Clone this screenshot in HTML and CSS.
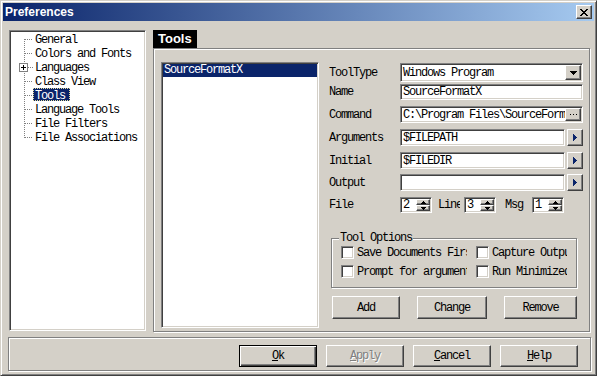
FILE: index.html
```html
<!DOCTYPE html>
<html lang="en">
<head>
  <meta charset="UTF-8">
  <title>Preferences</title>
  <link rel="stylesheet" href="styles.css">
</head>
<body>
  <div class="window">
    <div class="titlebar">
      <span class="title">Preferences</span>
      <span class="close">
        <svg width="8" height="7" viewBox="0 0 8 7"><path fill="#000" d="M0 0h2v1H0zM6 0h2v1H6zM1 1h2v1H1zM5 1h2v1H5zM2 2h4v1H2zM3 3h2v1H3zM2 4h4v1H2zM1 5h2v1H1zM5 5h2v1H5zM0 6h2v1H0zM6 6h2v1H6z"/></svg>
      </span>
    </div>

    <div class="main">
      <div class="tree sunken">
        <svg class="tree-lines" width="22" height="112" viewBox="0 0 22 112">
          <g stroke="#808080" stroke-dasharray="1 1" fill="none">
            <path d="M13.5 7v99"/>
            <path d="M14 7.5h8M14 21.5h8M17 35.5h5M14 49.5h8M14 63.5h8M14 77.5h8M14 91.5h8M14 105.5h8"/>
          </g>
          <rect x="8.5" y="31.5" width="8" height="8" fill="#fff" stroke="#808080"/>
          <path d="M10 35.5h5M12.5 33v5" stroke="#000"/>
        </svg>
        <ul class="tree-items">
          <li><span>General</span></li>
          <li><span>Colors and Fonts</span></li>
          <li><span>Languages</span></li>
          <li><span>Class View</span></li>
          <li><span class="sel">Tools</span></li>
          <li><span>Language Tools</span></li>
          <li><span>File Filters</span></li>
          <li><span>File Associations</span></li>
        </ul>
      </div>

      <div class="page">
        <div class="page-title">Tools</div>
        <div class="panel">
          <div class="tool-list sunken">
            <div class="list-item sel">SourceFormatX</div>
          </div>

          <div class="props">
            <div class="row r1">
              <label>ToolType</label>
              <div class="field sunken wide">
                <span class="val">Windows Program</span>
                <span class="btn inner-btn">
                  <svg width="7" height="4" viewBox="0 0 7 4"><path fill="#000" d="M0 0h7v1H0zM1 1h5v1H1zM2 2h3v1H2zM3 3h1v1H3z"/></svg>
                </span>
              </div>
            </div>
            <div class="row r2">
              <label>Name</label>
              <div class="field sunken wide"><span class="val">SourceFormatX</span></div>
            </div>
            <div class="row r3">
              <label>Command</label>
              <div class="field sunken wide">
                <span class="val">C:\Program Files\SourceFormatX\SFX.exe</span>
                <span class="btn inner-btn">
                  <svg width="7" height="1" viewBox="0 0 7 1"><path fill="#000" d="M0 0h1v1H0zM3 0h1v1H3zM6 0h1v1H6z"/></svg>
                </span>
              </div>
            </div>
            <div class="row r4">
              <label>Arguments</label>
              <div class="field sunken short"><span class="val">$FILEPATH</span></div>
              <span class="btn side-btn">
                <svg width="4" height="7" viewBox="0 0 4 7"><path fill="#0a246a" d="M0 0h1v7H0zM1 1h1v5H1zM2 2h1v3H2zM3 3h1v1H3z"/></svg>
              </span>
            </div>
            <div class="row r5">
              <label>Initial</label>
              <div class="field sunken short"><span class="val">$FILEDIR</span></div>
              <span class="btn side-btn">
                <svg width="4" height="7" viewBox="0 0 4 7"><path fill="#0a246a" d="M0 0h1v7H0zM1 1h1v5H1zM2 2h1v3H2zM3 3h1v1H3z"/></svg>
              </span>
            </div>
            <div class="row r6">
              <label>Output</label>
              <div class="field sunken short"><span class="val"></span></div>
              <span class="btn side-btn">
                <svg width="4" height="7" viewBox="0 0 4 7"><path fill="#0a246a" d="M0 0h1v7H0zM1 1h1v5H1zM2 2h1v3H2zM3 3h1v1H3z"/></svg>
              </span>
            </div>
            <div class="row r7">
              <label>File</label>
              <div class="spin sunken">
                <span class="val">2</span>
                <span class="spin-btns">
                  <span class="btn"><svg width="5" height="3" viewBox="0 0 5 3"><path fill="#000" d="M2 0h1v1H2zM1 1h3v1H1zM0 2h5v1H0z"/></svg></span>
                  <span class="btn"><svg width="5" height="3" viewBox="0 0 5 3"><path fill="#000" d="M0 0h5v1H0zM1 1h3v1H1zM2 2h1v1H2z"/></svg></span>
                </span>
              </div>
              <label class="lbl-line">Line</label>
              <div class="spin sunken">
                <span class="val">3</span>
                <span class="spin-btns">
                  <span class="btn"><svg width="5" height="3" viewBox="0 0 5 3"><path fill="#000" d="M2 0h1v1H2zM1 1h3v1H1zM0 2h5v1H0z"/></svg></span>
                  <span class="btn"><svg width="5" height="3" viewBox="0 0 5 3"><path fill="#000" d="M0 0h5v1H0zM1 1h3v1H1zM2 2h1v1H2z"/></svg></span>
                </span>
              </div>
              <label class="lbl-msg">Msg</label>
              <div class="spin sunken">
                <span class="val">1</span>
                <span class="spin-btns">
                  <span class="btn"><svg width="5" height="3" viewBox="0 0 5 3"><path fill="#000" d="M2 0h1v1H2zM1 1h3v1H1zM0 2h5v1H0z"/></svg></span>
                  <span class="btn"><svg width="5" height="3" viewBox="0 0 5 3"><path fill="#000" d="M0 0h5v1H0zM1 1h3v1H1zM2 2h1v1H2z"/></svg></span>
                </span>
              </div>
            </div>

            <div class="group">
              <span class="legend">Tool Options</span>
              <div class="checks">
                <div class="check"><span class="box sunken"></span><span class="clip c1">Save Documents First</span></div>
                <div class="check"><span class="box sunken"></span><span class="clip c2">Capture Output</span></div>
                <div class="check"><span class="box sunken"></span><span class="clip c1">Prompt for arguments</span></div>
                <div class="check"><span class="box sunken"></span><span class="clip c2">Run Minimized</span></div>
              </div>
            </div>

            <div class="actions">
              <button class="push b-add">Add</button>
              <button class="push b-change">Change</button>
              <button class="push b-remove">Remove</button>
            </div>
          </div>
        </div>
      </div>
    </div>

    <div class="footer">
      <button class="push default"><u>O</u>k</button>
      <button class="push disabled"><u>A</u>pply</button>
      <button class="push"><u>C</u>ancel</button>
      <button class="push"><u>H</u>elp</button>
    </div>
  </div>
</body>
</html>
```

FILE: styles.css
```css
* {
  box-sizing: border-box;
}
body {
  margin: 0;
  background: #d4d0c8;
  font-family: "Liberation Mono", monospace;
  font-size: 12px;
  letter-spacing: -1.2px;
  color: #000;
}
.window {
  width: 597px;
  height: 376px;
  border: 1px solid;
  border-color: #d4d0c8 #404040 #404040 #d4d0c8;
  box-shadow: inset 1px 1px #fff, inset -1px -1px #808080;
  padding: 2px;
  background: #d4d0c8;
}
.titlebar {
  height: 18px;
  display: flex;
  align-items: center;
  justify-content: space-between;
  padding: 0 2px;
  background: linear-gradient(to right, #0a246a, #a6caf0);
}
.title {
  font: bold 12px "Liberation Sans", Arial, sans-serif;
  letter-spacing: 0;
  color: #fff;
}
.btn,
.close {
  display: flex;
  align-items: center;
  justify-content: center;
  background: #d4d0c8;
  border: 1px solid;
  border-color: #fff #404040 #404040 #fff;
  box-shadow: inset -1px -1px #808080;
}
.close {
  width: 16px;
  height: 14px;
}
.sunken {
  background: #fff;
  border: 1px solid;
  border-color: #808080 #fff #fff #808080;
  box-shadow: inset 1px 1px #404040, inset -1px -1px #d4d0c8;
  padding: 1px;
}

/* left tree */
.main {
  display: flex;
  gap: 7px;
  padding: 9px 0 0 6px;
}
.tree {
  width: 137px;
  height: 301px;
  display: flex;
  align-items: flex-start;
}
.tree-lines {
  flex: none;
}
.tree-items {
  margin: 0;
  padding: 0;
  list-style: none;
}
.tree-items li {
  height: 14px;
  white-space: nowrap;
}
.tree-items span {
  display: inline-block;
  height: 13px;
  line-height: 17px;
  padding: 0 5px 0 2px;
}
.tree-items .sel {
  background: #0a246a;
  color: #fff;
  border: 1px dotted #e4dc9c;
  padding: 0 4px 0 1px;
  line-height: 14px;
}

/* right page */
.page {
  width: 438px;
}
.page-title {
  width: 44px;
  height: 18px;
  padding-left: 5px;
  background: #000;
  color: #fff;
  font: bold 13px "Liberation Sans", Arial, sans-serif;
  letter-spacing: 0;
  line-height: 17px;
}
.panel {
  width: 437px;
  height: 284px;
  border: 1px solid #808080;
  box-shadow: inset 1px 1px #fff, 1px 1px #fff;
  display: flex;
  padding: 13px 0 0 7px;
}
.tool-list {
  width: 158px;
  height: 266px;
  flex: none;
}
.list-item {
  height: 13px;
  line-height: 13px;
  padding-left: 1px;
}
.list-item.sel {
  background: #0a246a;
  color: #fff;
}
.props {
  margin-left: 10px;
  width: 254px;
  padding-top: 1px;
}
.row {
  display: flex;
  align-items: center;
}
.row label {
  width: 71px;
  flex: none;
  white-space: nowrap;
}
.r1 { height: 19px; }
.r2 { height: 16px; margin-top: 2px; }
.r3 { height: 17px; margin-top: 6px; }
.r4 { height: 17px; margin-top: 6px; }
.r5 { height: 17px; margin-top: 6px; }
.r6 { height: 17px; margin-top: 5px; }
.r7 { height: 16px; margin-top: 6px; }
.field {
  height: 100%;
  display: flex;
  align-items: center;
  overflow: hidden;
}
.field.wide {
  width: 183px;
}
.field.short {
  width: 165px;
}
.val {
  flex: 1;
  padding-left: 1px;
  white-space: nowrap;
  overflow: hidden;
}
.inner-btn {
  width: 16px;
  height: 100%;
  flex: none;
}
.side-btn {
  width: 16px;
  height: 17px;
  margin-left: 2px;
}
.spin {
  width: 32px;
  height: 16px;
  display: flex;
}
.spin .val {
  line-height: 12px;
}
.spin-btns {
  width: 14px;
  display: flex;
  flex-direction: column;
}
.spin-btns .btn {
  height: 6px;
}
.row .lbl-line {
  width: 22px;
  overflow: hidden;
  margin: 0 4px 0 6px;
}
.row .lbl-msg {
  width: 27px;
  margin-left: 9px;
}

/* tool options */
.group {
  margin: 25px 0 0 2px;
  width: 246px;
  height: 50px;
  border: 1px solid #808080;
  box-shadow: inset 1px 1px #fff, 1px 1px #fff;
  padding: 0 0 0 9px;
}
.legend {
  display: table;
  margin: -7px 0 0 -2px;
  padding: 0 1px;
  height: 12px;
  line-height: 12px;
  background: #d4d0c8;
}
.checks {
  display: grid;
  grid-template-columns: 135px 95px;
  row-gap: 6px;
  margin-top: 2px;
}
.check {
  display: flex;
  align-items: center;
  height: 13px;
}
.check .box {
  width: 13px;
  height: 13px;
  flex: none;
  margin-right: 3px;
}
.clip {
  white-space: nowrap;
  overflow: hidden;
}
.c1 { width: 110px; }
.c2 { width: 75px; }
.actions {
  display: flex;
  gap: 17px;
  margin: 8px 0 0 3px;
}
.push {
  height: 23px;
  padding: 0;
  font: inherit;
  letter-spacing: inherit;
  color: #000;
  background: #d4d0c8;
  border: 1px solid;
  border-color: #fff #404040 #404040 #fff;
  box-shadow: inset -1px -1px #808080;
}
.b-add { width: 68px; }
.b-change { width: 70px; }
.b-remove { width: 73px; }

/* bottom bar */
.footer {
  margin: 5px 0 0 5px;
  width: 583px;
  height: 34px;
  border: 1px solid #808080;
  box-shadow: inset 1px 1px #fff, 1px 1px #fff;
  display: flex;
  justify-content: flex-end;
  align-items: flex-start;
  gap: 9px;
  padding: 7px 12px 0 0;
}
.footer .push {
  width: 78px;
  height: 22px;
}
.push.default {
  border-color: #000;
  box-shadow: inset 1px 1px #fff, inset -1px -1px #404040, inset -2px -2px #808080;
}
.push.disabled {
  color: #808080;
  text-shadow: 1px 1px #fff;
}
```
